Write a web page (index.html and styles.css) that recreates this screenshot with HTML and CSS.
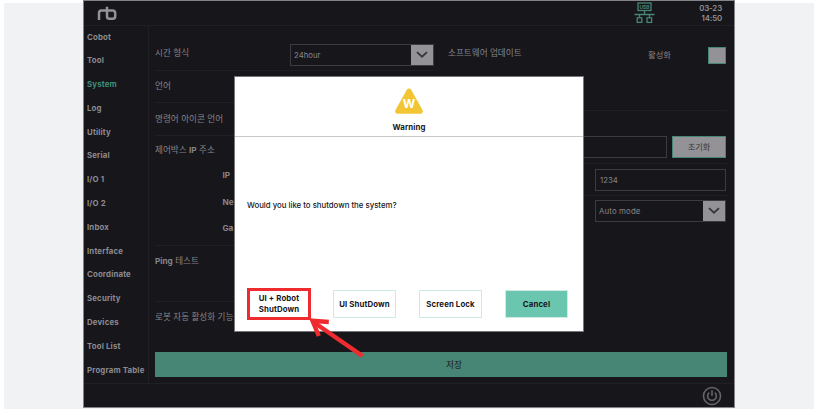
FILE: index.html
```html
<!DOCTYPE html>
<html lang="ko">
<head>
<meta charset="utf-8">
<title>System</title>
<link rel="stylesheet" href="styles.css">
</head>
<body>
<div class="stage">
  <div class="app">
    <header class="topbar">
      <svg class="logo" width="20" height="15" viewBox="0 0 20 15" fill="none" stroke="#929297" stroke-width="2.5" stroke-linejoin="round"><path d="M2 14V7Q2 4.6 4.4 4.6H15.5Q18.2 4.6 18.2 7.2V10.2Q18.2 12.8 15.5 12.8H12.6Q10 12.8 10 10.2V0.8"/></svg>
      <div class="status">
        <svg width="21" height="23" viewBox="0 0 21 23" fill="none" stroke="#478575" stroke-width="1.3"><rect x="4" y="2" width="13" height="7.5"/><path d="M10.5 9.5v4M0.5 13.5h20M5.5 13.5v3M15.5 13.5v3"/><rect x="3.2" y="16.8" width="4.6" height="4.6"/><rect x="13" y="16.8" width="4.6" height="4.6"/><text x="10.5" y="7.7" class="usb">USB</text></svg>
        <div class="clock">03-23<br>14:50</div>
      </div>
    </header>
    <div class="body">
      <nav class="side">
        <a>Cobot</a><a>Tool</a><a class="on">System</a><a>Log</a><a>Utility</a><a>Serial</a><a>I/O 1</a><a>I/O 2</a><a>Inbox</a><a>Interface</a><a>Coordinate</a><a>Security</a><a>Devices</a><a>Tool List</a><a>Program Table</a>
      </nav>
      <main class="main">
        <div class="columns">
          <section class="col">
            <div class="row time"><span>시간 형식</span><div class="select wide"><span>24hour</span><i><svg width="12" height="8" viewBox="0 0 12 8"><path d="M1 1.2L6 5.7L11 1.2"/></svg></i></div></div>
            <div class="row lang"><span>언어</span></div>
            <div class="row icons"><span>명령어 아이콘 언어</span></div>
            <div class="row box">
              <span>제어박스 <b>IP</b> 주소</span>
              <div class="nets"><b>IP</b><b>Ne</b><b>Ga</b></div>
            </div>
            <div class="row ping"><span><b>Ping</b> 테스트</span></div>
            <div class="row auto"><span>로봇 자동 활성화 기능</span></div>
          </section>
          <section class="col right">
            <div class="row update"><span>소프트웨어 업데이트</span><span class="enable">활성화</span><span class="check"></span></div>
            <div class="row reset"><div class="input"></div><button class="init">초기화</button></div>
            <div class="row code"><div class="input small">1234</div></div>
            <div class="row mode"><div class="select"><span>Auto mode</span><i><svg width="12" height="8" viewBox="0 0 12 8"><path d="M1 1.2L6 5.7L11 1.2"/></svg></i></div></div>
          </section>
        </div>
        <button class="save">저장</button>
      </main>
    </div>
    <footer class="foot">
      <svg width="20" height="20" viewBox="0 0 20 20" fill="none" stroke="#646469" stroke-width="1.6"><circle cx="10" cy="10" r="8.5"/><path d="M7.2 6.6A4.4 4.4 0 1 0 12.8 6.6M10 4.3V10"/></svg>
    </footer>
  </div>
  <div class="modal">
    <div class="modal-head">
      <svg width="30" height="28" viewBox="0 0 30 28"><path d="M15 4L26.3 24.2H3.7Z" fill="#f2c535" stroke="#f2c535" stroke-width="5" stroke-linejoin="round"/><text x="15" y="20.6" class="mark">W</text></svg>
      <div class="title">Warning</div>
    </div>
    <p class="message">Would you like to shutdown the system?</p>
    <div class="actions">
      <button class="picked">UI + Robot<br>ShutDown</button>
      <button>UI ShutDown</button>
      <button>Screen Lock</button>
      <button class="cancel">Cancel</button>
    </div>
  </div>
  <svg class="pointer" width="60" height="46" viewBox="0 0 60 46" fill="none" stroke="#ee2b2e" stroke-width="4.4"><path d="M56.5 41L6 6"/><path d="M22.8 7L6.5 5.8L12.8 21"/></svg>
</div>
</body>
</html>
```
FILE: styles.css
```css
* { box-sizing: border-box; }
body {
  margin: 0;
  width: 820px;
  height: 409px;
  overflow: hidden;
  background: #fff;
  font-family: Inter, "Noto Sans CJK KR", sans-serif;
  font-size: 7.8px;
  color: #85858a;
}
button { font: inherit; padding: 0; border: 0; }
b { font-weight: 700; }
.stage {
  position: relative;
  width: 820px;
  height: 409px;
  padding-left: 83px;
  background: linear-gradient(#f0f2f4, #f0f2f4) 4px 3px / 810px 406px no-repeat;
}
.app {
  display: flex;
  flex-direction: column;
  width: 652px;
  height: 408px;
  background: #17161b;
  border: 1px solid #828387;
}
.topbar {
  display: flex;
  justify-content: space-between;
  height: 24.5px;
  padding: 0 12px 0 13px;
  border-bottom: 1px solid #1f1f24;
}
.logo { margin-top: 5px; }
.status { display: flex; gap: 44px; }
.usb { font-size: 5px; font-weight: 700; fill: #478575; stroke: none; text-anchor: middle; }
.clock {
  width: 23px;
  padding-top: 2px;
  font-weight: 600;
  line-height: 10px;
  text-align: right;
  white-space: nowrap;
  letter-spacing: -0.1px;
  color: #929297;
}
.body { display: flex; height: 357px; }
.side {
  display: flex;
  flex-direction: column;
  width: 66px;
  border-right: 1px solid #1f1f24;
  font-weight: 700;
  font-size: 7.8px;
  letter-spacing: 0.18px;
  white-space: nowrap;
  color: #8c8c91;
}
.side a { height: 23.8px; padding-left: 3px; line-height: 23.8px; }
.side .on { color: #3f9078; }
.main { flex: 1; padding: 0 7px 0 6px; }
.columns { display: flex; gap: 14px; height: 326.5px; }
.col { width: 279px; }
.row { display: flex; border-bottom: 1px solid #1f1f24; line-height: 12px; white-space: nowrap; }
.row > span { font-size: 8.6px; }
.row b { font-size: 8.2px; }
.time { height: 45px; padding-top: 21.5px; justify-content: space-between; }
.select {
  display: flex;
  justify-content: space-between;
  width: 131px;
  height: 22px;
  border: 1px solid #3b3b40;
  line-height: 20px;
  padding-left: 3px;
}
.select i { display: flex; align-items: center; justify-content: center; width: 22px; background: #929297; }
.select path { fill: none; stroke: #36363b; stroke-width: 1.8; }
.wide { width: 144px; margin-top: -3px; }
.lang { height: 32.5px; padding-top: 9px; }
.icons { height: 33px; padding-top: 10px; }
.box { height: 109.5px; padding-top: 8px; }
.nets { display: flex; flex-direction: column; gap: 14.5px; margin: 25px 0 0 7.5px; }
.ping { height: 56px; padding-top: 9px; }
.auto { padding-top: 9px; border: 0; }
.update { height: 85px; padding-top: 21.5px; }
.enable { margin: 2px 0 0 auto; }
.row .enable { font-size: 8.3px; }
.check { width: 18px; height: 17px; margin: 0 1px 0 37px; background: #929297; border: 1px solid #478575; }
.reset { height: 53.5px; padding: 25.5px 1px 0 0; gap: 5px; }
.input { flex: 1; height: 22px; border: 1px solid #3b3b40; line-height: 20px; padding-left: 4px; }
.init { width: 54px; height: 22px; background: #929297; border: 1px solid #478575; color: #38383d; font-size: 8.2px; line-height: 18px; }
.code { height: 31.5px; padding: 4.5px 1px 0 147px; }
.mode { padding: 4.5px 1px 0 147px; border: 0; }
.mode .select > span { letter-spacing: 0.15px; }
.save { display: block; width: 572px; height: 25px; background: #478575; color: #17161b; font-size: 8.6px; line-height: 22px; padding-left: 26px; }
.foot { display: flex; flex: 1; justify-content: flex-end; padding: 2px 12px 0 0; border-top: 1px solid #1f1f24; }
.modal {
  position: absolute;
  left: 234px;
  top: 76px;
  width: 350px;
  height: 256px;
  display: flex;
  flex-direction: column;
  background: #fff;
  border: 1px solid #77777b;
  color: #17161b;
}
.modal-head { height: 60px; padding-top: 10px; border-bottom: 1.5px solid #c8c8c8; text-align: center; }
.modal-head svg { display: block; margin: 0 auto; }
.mark { font-size: 12px; font-weight: 700; fill: #fff; text-anchor: middle; }
.title { margin-top: 6px; font-weight: 700; line-height: 12px; letter-spacing: 0.1px; }
.message { margin: 62px 0 0 12px; line-height: 12px; font-weight: 500; }
.actions { display: flex; align-items: center; gap: 23px; margin: 77px 0 0 12px; }
.actions button { width: 63px; height: 28px; background: #fff; border: 1px solid #cdebe2; color: #17161b; font-weight: 700; line-height: 11px; letter-spacing: 0.13px; white-space: nowrap; }
.actions .picked { width: 64px; height: 32px; margin-right: -1px; border: 3px solid #ee2b2e; }
.actions .cancel { background: #6ac6ae; }
.pointer { position: absolute; left: 306px; top: 315px; }
```
